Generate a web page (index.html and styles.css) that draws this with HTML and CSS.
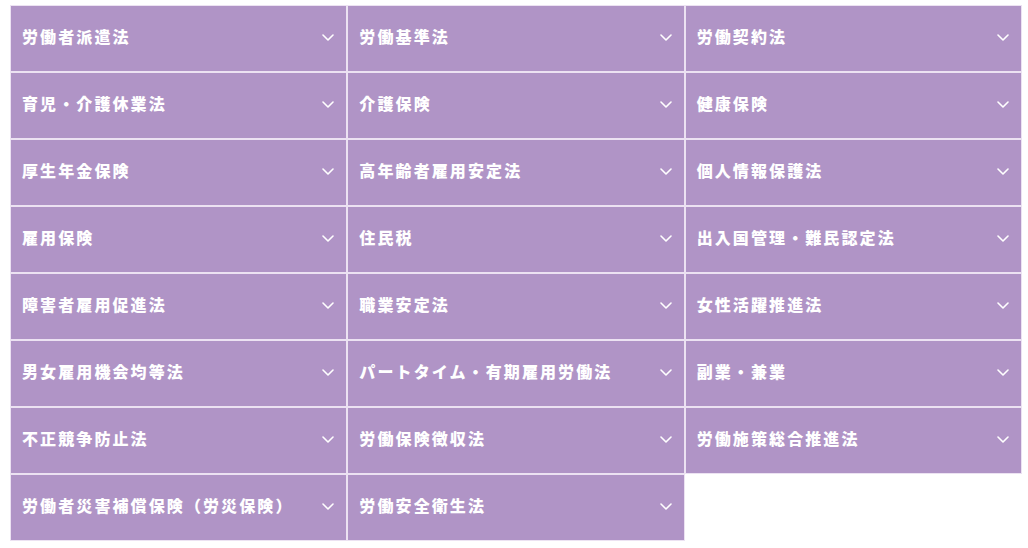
FILE: index.html
```html
<!DOCTYPE html>
<html lang="ja">
<head>
<meta charset="utf-8">
<link rel="stylesheet" href="styles.css">
</head>
<body>
<div class="grid">
  <div class="item"><span class="label">労働者派遣法</span><svg class="chev" viewBox="0 0 12 7"><path d="M1 1l5 5 5-5"/></svg></div>
  <div class="item"><span class="label">労働基準法</span><svg class="chev" viewBox="0 0 12 7"><path d="M1 1l5 5 5-5"/></svg></div>
  <div class="item"><span class="label">労働契約法</span><svg class="chev" viewBox="0 0 12 7"><path d="M1 1l5 5 5-5"/></svg></div>
  <div class="item"><span class="label">育児・介護休業法</span><svg class="chev" viewBox="0 0 12 7"><path d="M1 1l5 5 5-5"/></svg></div>
  <div class="item"><span class="label">介護保険</span><svg class="chev" viewBox="0 0 12 7"><path d="M1 1l5 5 5-5"/></svg></div>
  <div class="item"><span class="label">健康保険</span><svg class="chev" viewBox="0 0 12 7"><path d="M1 1l5 5 5-5"/></svg></div>
  <div class="item"><span class="label">厚生年金保険</span><svg class="chev" viewBox="0 0 12 7"><path d="M1 1l5 5 5-5"/></svg></div>
  <div class="item"><span class="label">高年齢者雇用安定法</span><svg class="chev" viewBox="0 0 12 7"><path d="M1 1l5 5 5-5"/></svg></div>
  <div class="item"><span class="label">個人情報保護法</span><svg class="chev" viewBox="0 0 12 7"><path d="M1 1l5 5 5-5"/></svg></div>
  <div class="item"><span class="label">雇用保険</span><svg class="chev" viewBox="0 0 12 7"><path d="M1 1l5 5 5-5"/></svg></div>
  <div class="item"><span class="label">住民税</span><svg class="chev" viewBox="0 0 12 7"><path d="M1 1l5 5 5-5"/></svg></div>
  <div class="item"><span class="label">出入国管理・難民認定法</span><svg class="chev" viewBox="0 0 12 7"><path d="M1 1l5 5 5-5"/></svg></div>
  <div class="item"><span class="label">障害者雇用促進法</span><svg class="chev" viewBox="0 0 12 7"><path d="M1 1l5 5 5-5"/></svg></div>
  <div class="item"><span class="label">職業安定法</span><svg class="chev" viewBox="0 0 12 7"><path d="M1 1l5 5 5-5"/></svg></div>
  <div class="item"><span class="label">女性活躍推進法</span><svg class="chev" viewBox="0 0 12 7"><path d="M1 1l5 5 5-5"/></svg></div>
  <div class="item"><span class="label">男女雇用機会均等法</span><svg class="chev" viewBox="0 0 12 7"><path d="M1 1l5 5 5-5"/></svg></div>
  <div class="item"><span class="label">パートタイム・有期雇用労働法</span><svg class="chev" viewBox="0 0 12 7"><path d="M1 1l5 5 5-5"/></svg></div>
  <div class="item"><span class="label">副業・兼業</span><svg class="chev" viewBox="0 0 12 7"><path d="M1 1l5 5 5-5"/></svg></div>
  <div class="item"><span class="label">不正競争防止法</span><svg class="chev" viewBox="0 0 12 7"><path d="M1 1l5 5 5-5"/></svg></div>
  <div class="item"><span class="label">労働保険徴収法</span><svg class="chev" viewBox="0 0 12 7"><path d="M1 1l5 5 5-5"/></svg></div>
  <div class="item"><span class="label">労働施策総合推進法</span><svg class="chev" viewBox="0 0 12 7"><path d="M1 1l5 5 5-5"/></svg></div>
  <div class="item"><span class="label">労働者災害補償保険（労災保険）</span><svg class="chev" viewBox="0 0 12 7"><path d="M1 1l5 5 5-5"/></svg></div>
  <div class="item"><span class="label">労働安全衛生法</span><svg class="chev" viewBox="0 0 12 7"><path d="M1 1l5 5 5-5"/></svg></div>
</div>
</body>
</html>
```

FILE: styles.css
```css
html, body {
  margin: 0;
  padding: 0;
  background: #ffffff;
}
body {
  font-family: "Noto Sans CJK JP", "Noto Sans", sans-serif;
}
.grid {
  display: grid;
  grid-template-columns: repeat(3, 1fr);
  grid-auto-rows: 67px;
  width: 1012px;
  padding: 5px 0 0 10px;
}
.item {
  display: flex;
  align-items: center;
  justify-content: space-between;
  background: #b094c6;
  border: 1px solid #ece2f2;
  padding: 0 12px 2px 11px;
  color: #ffffff;
}
.label {
  font-size: 16px;
  font-weight: 900;
  letter-spacing: 2.1px;
  line-height: 1;
  white-space: nowrap;
  margin-bottom: 4px;
}
.chev {
  width: 12px;
  height: 7px;
  flex: none;
  fill: none;
  stroke: #ffffff;
  stroke-width: 1.6;
  stroke-linecap: round;
  stroke-linejoin: round;
}
```
